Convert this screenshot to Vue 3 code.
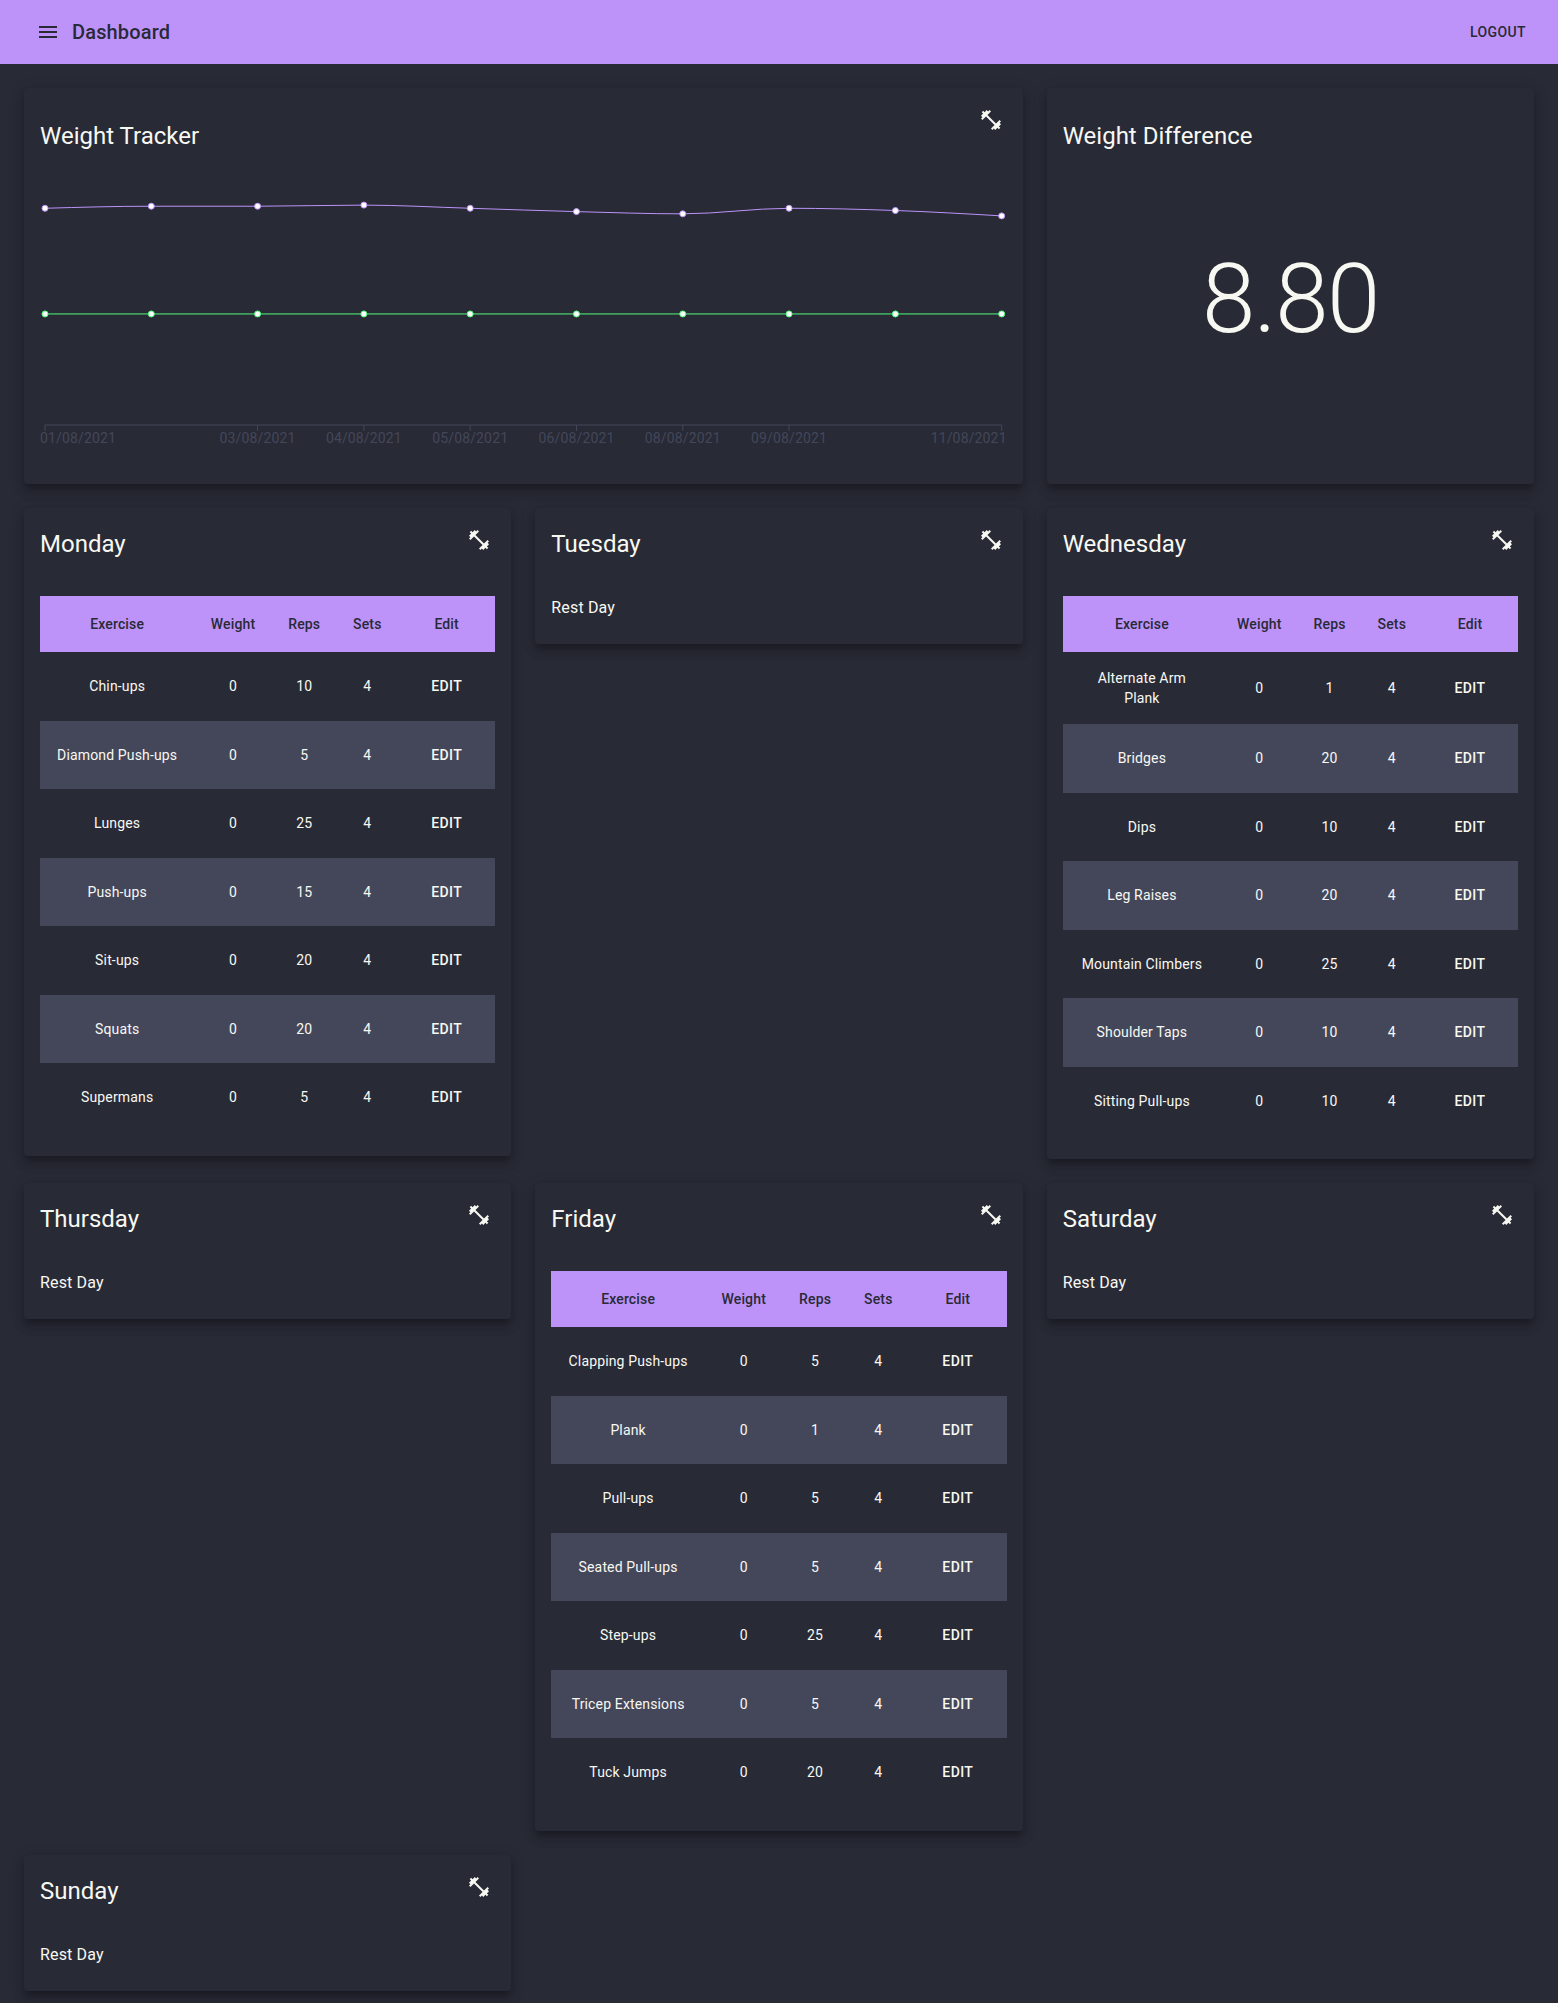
<script setup>
import { ref, computed, onMounted, onBeforeUnmount } from 'vue'

const ex = (name, reps) => ({ name, weight: 0, reps, sets: 4 })

const days = [
  {
    name: 'Monday',
    exercises: [
      ex('Chin-ups', 10),
      ex('Diamond Push-ups', 5),
      ex('Lunges', 25),
      ex('Push-ups', 15),
      ex('Sit-ups', 20),
      ex('Squats', 20),
      ex('Supermans', 5),
    ],
  },
  { name: 'Tuesday', exercises: [] },
  {
    name: 'Wednesday',
    exercises: [
      ex('Alternate Arm Plank', 1),
      ex('Bridges', 20),
      ex('Dips', 10),
      ex('Leg Raises', 20),
      ex('Mountain Climbers', 25),
      ex('Shoulder Taps', 10),
      ex('Sitting Pull-ups', 10),
    ],
  },
  { name: 'Thursday', exercises: [] },
  {
    name: 'Friday',
    exercises: [
      ex('Clapping Push-ups', 5),
      ex('Plank', 1),
      ex('Pull-ups', 5),
      ex('Seated Pull-ups', 5),
      ex('Step-ups', 25),
      ex('Tricep Extensions', 5),
      ex('Tuck Jumps', 20),
    ],
  },
  { name: 'Saturday', exercises: [] },
  { name: 'Sunday', exercises: [] },
]

const dumbbell =
  'M20.57 14.86L22 13.43 20.57 12 17 15.57 8.43 7 12 3.43 10.57 2 9.14 3.43 7.71 2 5.57 4.14 4.14 2.71 2.71 4.14l1.43 1.43L2 7.71l1.43 1.43L2 10.57 3.43 12 7 8.43 15.57 17 12 20.57 13.43 22l1.43-1.43L16.29 22l2.14-2.14 1.43 1.43 1.43-1.43-1.43-1.43L22 16.29z'

// Weight chart geometry
const height = 300
const pad = 5
const axisY = height - 35
const maxWeight = 140
const weights = [116.7, 117.8, 117.8, 118.4, 116.7, 114.9, 113.7, 116.7, 115.5, 112.6]
const goal = 59.8
const labels = [
  '01/08/2021', '', '03/08/2021', '04/08/2021', '05/08/2021',
  '06/08/2021', '08/08/2021', '09/08/2021', '', '11/08/2021',
]

const chart = ref(null)
const width = ref(960)
let observer
onMounted(() => {
  const measure = () => { width.value = chart.value.getBoundingClientRect().width }
  measure()
  observer = new ResizeObserver(measure)
  observer.observe(chart.value)
})
onBeforeUnmount(() => observer.disconnect())

const toY = (v) => axisY - (v / maxWeight) * (axisY - pad)
const xs = computed(() => weights.map((_, i) => pad + (i * (width.value - 2 * pad)) / (weights.length - 1)))
const points = computed(() => weights.map((w, i) => ({ x: xs.value[i], y: toY(w) })))

// Monotone cubic interpolation, so the curve never overshoots a reading
const curve = computed(() => {
  const p = points.value
  const slopes = p.slice(1).map((q, i) => (q.y - p[i].y) / (q.x - p[i].x))
  const tangents = p.map((_, i) => {
    if (i === 0 || i === p.length - 1) return null
    const a = slopes[i - 1]
    const b = slopes[i]
    return a * b <= 0 ? 0 : Math.sign(a) * Math.min(Math.abs(a), Math.abs(b), Math.abs(a + b) / 4) * 2
  })
  tangents[0] = (3 * slopes[0] - tangents[1]) / 2
  tangents[p.length - 1] = (3 * slopes[slopes.length - 1] - tangents[p.length - 2]) / 2
  let d = `M${p[0].x},${p[0].y}`
  for (let i = 1; i < p.length; i++) {
    const h = (p[i].x - p[i - 1].x) / 3
    d += `C${p[i - 1].x + h},${p[i - 1].y + h * tangents[i - 1]} ${p[i].x - h},${p[i].y - h * tangents[i]} ${p[i].x},${p[i].y}`
  }
  return d
})

const labelX = (i) => (i === 0 ? 0 : i === labels.length - 1 ? width.value : xs.value[i])
const labelAnchor = (i) => (i === 0 ? 'start' : i === labels.length - 1 ? 'end' : 'middle')
</script>

<template>
  <div class="page">
    <header class="app-bar">
      <button class="icon-button" type="button" aria-label="Open menu">
        <svg viewBox="0 0 24 24"><path d="M3 18h18v-2H3v2zm0-5h18v-2H3v2zm0-7v2h18V6H3z" /></svg>
      </button>
      <h1 class="app-title">Dashboard</h1>
      <button class="text-button" type="button">Logout</button>
    </header>

    <main class="grid">
      <section class="card wide">
        <div class="card-header tall">
          <h2 class="card-title">Weight Tracker</h2>
          <button class="icon-button action" type="button" aria-label="Add weight">
            <svg viewBox="0 0 24 24"><path :d="dumbbell" /></svg>
          </button>
        </div>
        <div ref="chart" class="chart">
          <svg :width="width" :height="height" role="img" aria-label="Weight over time">
            <path class="axis" :d="`M${pad},${axisY}H${width - pad}`" />
            <template v-for="(label, i) in labels" :key="i">
              <path v-if="label" class="axis" :d="`M${xs[i]},${axisY}v6`" />
              <text v-if="label" class="tick" :x="labelX(i)" :y="axisY + 18" :text-anchor="labelAnchor(i)">{{ label }}</text>
            </template>
            <path class="line weight" :d="curve" />
            <circle v-for="(p, i) in points" :key="`w${i}`" class="dot weight" :cx="p.x" :cy="p.y" r="3" />
            <path class="line goal" :d="`M${pad},${toY(goal)}H${width - pad}`" />
            <circle v-for="(x, i) in xs" :key="`g${i}`" class="dot goal" :cx="x" :cy="toY(goal)" r="3" />
          </svg>
        </div>
      </section>

      <section class="card difference">
        <div class="card-header tall">
          <h2 class="card-title">Weight Difference</h2>
        </div>
        <p class="figure">8.80</p>
      </section>

      <section v-for="day in days" :key="day.name" class="card">
        <div class="card-header">
          <h2 class="card-title">{{ day.name }}</h2>
          <button class="icon-button action" type="button" :aria-label="`Add exercise on ${day.name}`">
            <svg viewBox="0 0 24 24"><path :d="dumbbell" /></svg>
          </button>
        </div>
        <div class="card-content">
          <table v-if="day.exercises.length">
            <thead>
              <tr>
                <th scope="col">Exercise</th>
                <th scope="col">Weight</th>
                <th scope="col">Reps</th>
                <th scope="col">Sets</th>
                <th scope="col">Edit</th>
              </tr>
            </thead>
            <tbody>
              <tr v-for="e in day.exercises" :key="e.name">
                <td>{{ e.name }}</td>
                <td>{{ e.weight }}</td>
                <td>{{ e.reps }}</td>
                <td>{{ e.sets }}</td>
                <td><button class="text-button" type="button">Edit</button></td>
              </tr>
            </tbody>
          </table>
          <p v-else class="rest">Rest Day</p>
        </div>
      </section>
    </main>
  </div>
</template>

<style>
body {
  margin: 0;
  background: #282a36;
}
</style>

<style scoped>
.page {
  font-family: Roboto, "Liberation Sans", sans-serif;
  color: #f8f8f2;
  font-size: 14px;
  -webkit-font-smoothing: antialiased;
}
.page * {
  box-sizing: border-box;
}
h1,
h2,
p {
  margin: 0;
}
button {
  border: 0;
  background: none;
  font-family: inherit;
  color: inherit;
  cursor: pointer;
}
.app-bar {
  display: flex;
  align-items: center;
  height: 64px;
  padding: 0 24px;
  background: #bd93f9;
  color: #282a36;
}
.app-title {
  flex: 1;
  font-size: 20px;
  font-weight: 500;
  line-height: 32px;
  letter-spacing: 0.0075em;
}
.icon-button {
  flex: none;
  width: 48px;
  height: 48px;
  padding: 12px;
}
.icon-button svg {
  display: block;
  width: 24px;
  height: 24px;
  fill: currentColor;
}
.text-button {
  min-width: 64px;
  padding: 6px 8px;
  font-size: 14px;
  font-weight: 500;
  line-height: 1.75;
  letter-spacing: 0.02857em;
  text-transform: uppercase;
}
.grid {
  display: grid;
  grid-template-columns: repeat(3, minmax(0, 1fr));
  gap: 24px;
  align-items: start;
  padding: 24px 24px 12px;
}
.card {
  border-radius: 4px;
  background: #282a36;
  box-shadow: 0 5px 5px -3px rgba(0, 0, 0, 0.2), 0 8px 10px 1px rgba(0, 0, 0, 0.14),
    0 3px 14px 2px rgba(0, 0, 0, 0.12);
}
.wide {
  grid-column: span 2;
}
.card-header {
  display: flex;
  align-items: center;
  padding: 16px;
}
.card-header.tall {
  padding-bottom: 8px;
}
.tall .card-title {
  padding: 16px 0 0;
}
.card-title {
  flex: 1;
  font-size: 24px;
  font-weight: 400;
  line-height: 32px;
}
.action {
  align-self: flex-start;
  margin: -8px -8px 0 0;
}
.card-content {
  padding: 16px 16px 24px;
}
.chart {
  height: 300px;
  margin: 0 16px 24px;
}
.chart svg {
  display: block;
}
.axis {
  fill: none;
  stroke: #44475a;
}
.tick {
  fill: #44475a;
  letter-spacing: 0.01071em;
}
.line {
  fill: none;
}
.dot {
  fill: #fff;
}
.weight {
  stroke: #bd93f9;
}
.goal {
  stroke: #50fa7b;
}
.difference {
  align-self: stretch;
  display: flex;
  flex-direction: column;
}
.figure {
  flex: 1;
  padding-top: 83px;
  font-size: 96px;
  font-weight: 300;
  line-height: 112px;
  letter-spacing: -0.01562em;
  text-align: center;
}
table {
  width: 100%;
  border-collapse: collapse;
}
th,
td {
  padding: 16px;
  text-align: center;
  line-height: 20px;
  letter-spacing: 0.01071em;
  font-weight: 400;
}
th {
  font-weight: 500;
  line-height: 24px;
}
thead tr {
  background: #bd93f9;
  color: #282a36;
}
tbody tr:nth-child(even) {
  background: #44475a;
}
.rest {
  font-size: 16px;
  line-height: 24px;
  letter-spacing: 0.00938em;
}
</style>
